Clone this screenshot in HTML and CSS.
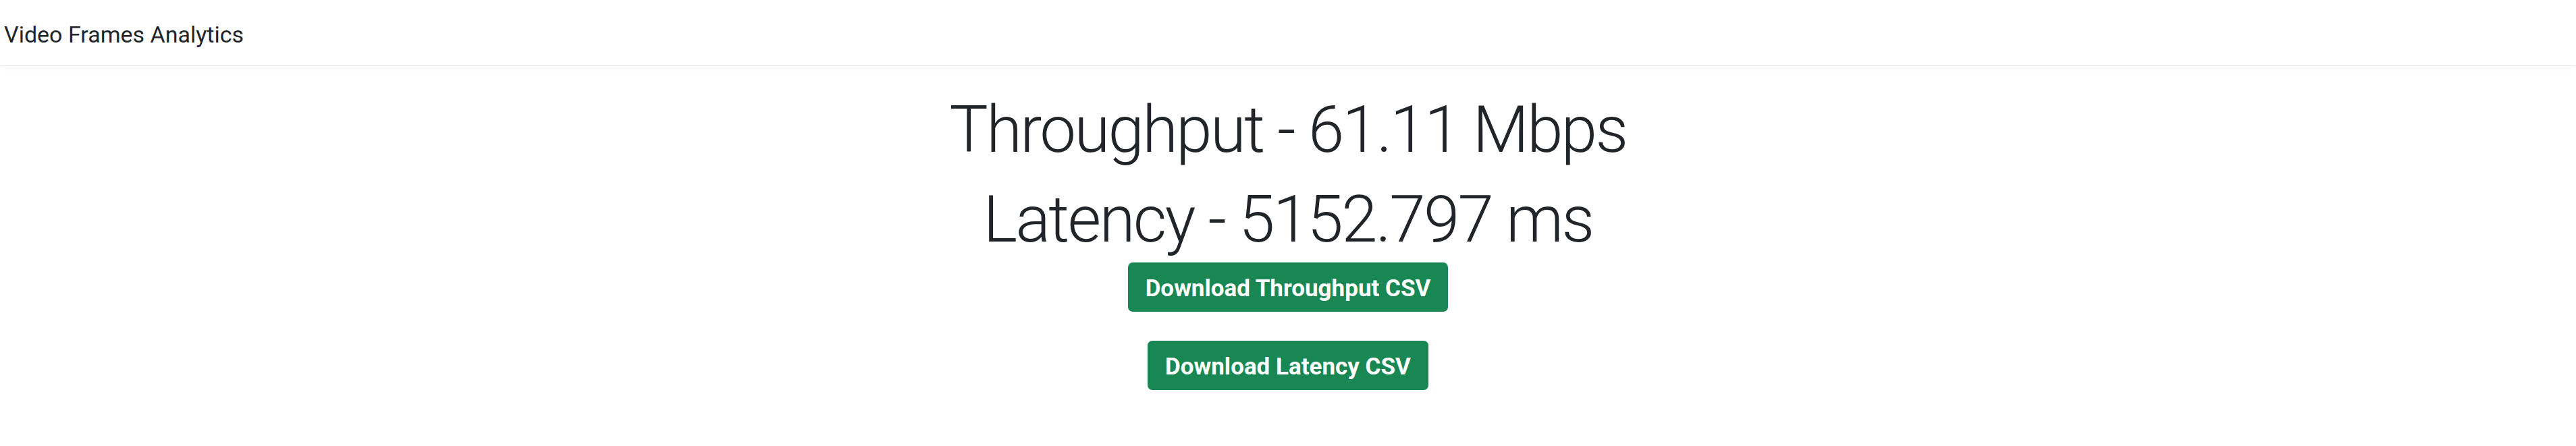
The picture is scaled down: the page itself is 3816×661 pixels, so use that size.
FILE: index.html
```html
<!DOCTYPE html>
<html lang="en">
<head>
<meta charset="utf-8">
<title>Video Frames Analytics</title>
<link rel="stylesheet" href="styles.css">
</head>
<body>
<header class="navbar">
  <a class="navbar-brand" href="#">Video Frames Analytics</a>
</header>
<main class="content">
  <h1 class="display">Throughput - 61.11 Mbps</h1>
  <h1 class="display">Latency - 5152.797 ms</h1>
  <div class="actions">
    <a class="btn" href="#">Download Throughput CSV</a>
    <a class="btn" href="#">Download Latency CSV</a>
  </div>
</main>
</body>
</html>
```
FILE: styles.css
```css
html, body {
  margin: 0;
  padding: 0;
  background: #fff;
}
body {
  font-family: Roboto, "Liberation Sans", sans-serif;
  color: #212529;
}
.navbar {
  height: 98px;
  padding: 29px 6px 0;
  box-sizing: border-box;
  border-bottom: 1px solid #e3e5e8;
  box-shadow: 0 4px 12px rgba(0, 0, 0, 0.02);
}
.navbar-brand {
  display: block;
  font-size: 34px;
  line-height: 45px;
  font-weight: 400;
  color: #212529;
  text-decoration: none;
  white-space: nowrap;
}
.content {
  display: flex;
  flex-direction: column;
  align-items: center;
  padding-top: 37px;
}
.display {
  margin: 0 0 18px;
  font-size: 96px;
  line-height: 115px;
  font-weight: 300;
  letter-spacing: -2.6px;
  white-space: nowrap;
}
.display:last-of-type {
  margin-bottom: 6px;
}
.actions {
  display: flex;
  flex-direction: column;
  align-items: center;
  gap: 43px;
}
.btn {
  display: block;
  padding: 14px 26px 10px;
  font-size: 35px;
  line-height: 49px;
  font-weight: 700;
  color: #fff;
  background: #198754;
  border-radius: 7px;
  text-decoration: none;
  white-space: nowrap;
}
```
